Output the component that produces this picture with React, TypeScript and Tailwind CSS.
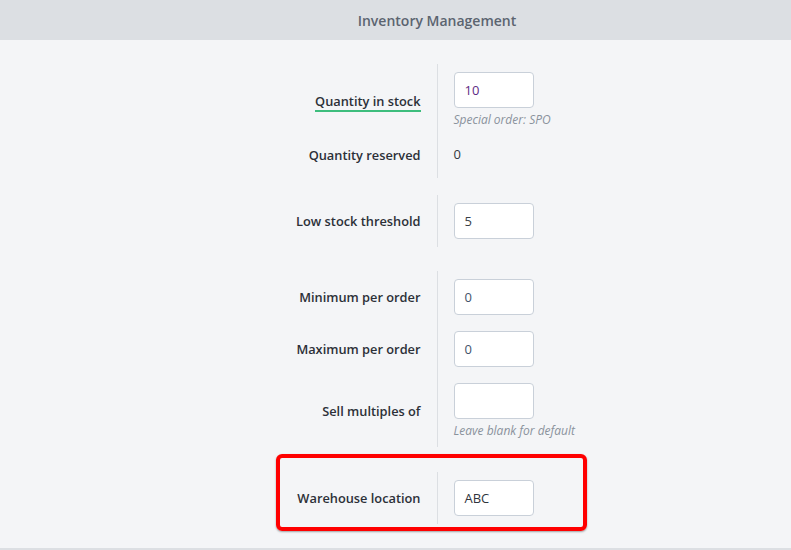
import React from "react";

type Row = {
  label: string;
  field: React.ReactNode;
  help?: string;
  underline?: boolean;
  extraBottom?: boolean;
};

function Input({ value, color }: { value: string; color: string }) {
  return (
    <div className={`w-20 h-9 rounded border border-[#c9d0d9] bg-white px-[10px] pt-px flex items-center text-[13px] ${color}`}>
      {value}
    </div>
  );
}

function Group({ rows, redBox, className }: { rows: Row[]; redBox?: boolean; className?: string }) {
  return (
    <div className={`relative ${className ?? ""}`}>
      {rows.map((r, i) => (
        <div key={i} className="flex">
          <div
            className={`flex-1 flex items-center justify-end pr-4 border-r border-[#dcdfe3] pt-2 ${
              r.extraBottom ? "pb-3" : "pb-2"
            }`}
          >
            <span
              className={`text-[12.8px] font-semibold text-[#2c3038] ${
                r.underline ? "mt-[3px] border-b-2 border-[#3dbd7d] leading-[18px]" : "leading-5"
              }`}
            >
              {r.label}
            </span>
          </div>
          <div className={`flex-1 pl-4 pt-2 ${r.extraBottom ? "pb-3" : "pb-2"}`}>
            {r.field}
            {r.help && <div className="mt-1 text-xs leading-4 italic text-[#8a929c]">{r.help}</div>}
          </div>
        </div>
      ))}
      {redBox && (
        <div className="pointer-events-none absolute left-[276px] top-[-18px] w-[311px] h-[77px] rounded-[6px] border-4 border-[#ff0000] shadow-[0_1px_2px_rgba(0,0,0,0.35)]" />
      )}
    </div>
  );
}

export default function App() {
  return (
    <div className="w-full h-[550px] overflow-hidden bg-[#f4f5f7] font-['Open_Sans',sans-serif]">
      <div className="w-[874px]">
        <div className="h-10 bg-[#dcdfe3] flex items-center justify-center text-[14px] font-semibold text-[#5b6470]">
          Inventory Management
        </div>
        <div className="pt-6 pb-6 border-b-2 border-[#dcdfe3]">
          <Group
            rows={[
              {
                label: "Quantity in stock",
                underline: true,
                field: <Input value="10" color="text-[#5e2a84]" />,
                help: "Special order: SPO",
              },
              {
                label: "Quantity reserved",
                extraBottom: true,
                field: <div className="h-[22px] flex items-center text-[13px] text-[#333840]">0</div>,
              },
            ]}
          />
          <Group
            className="mt-[17px]"
            rows={[{ label: "Low stock threshold", field: <Input value="5" color="text-[#3a3f47]" /> }]}
          />
          <Group
            className="mt-6"
            rows={[
              { label: "Minimum per order", field: <Input value="0" color="text-[#43536b]" /> },
              { label: "Maximum per order", field: <Input value="0" color="text-[#43536b]" /> },
              { label: "Sell multiples of", field: <Input value="" color="" />, help: "Leave blank for default" },
            ]}
          />
          <Group
            className="mt-[25px]"
            redBox
            rows={[{ label: "Warehouse location", field: <Input value="ABC" color="text-[#2f343c]" /> }]}
          />
        </div>
      </div>
    </div>
  );
}
